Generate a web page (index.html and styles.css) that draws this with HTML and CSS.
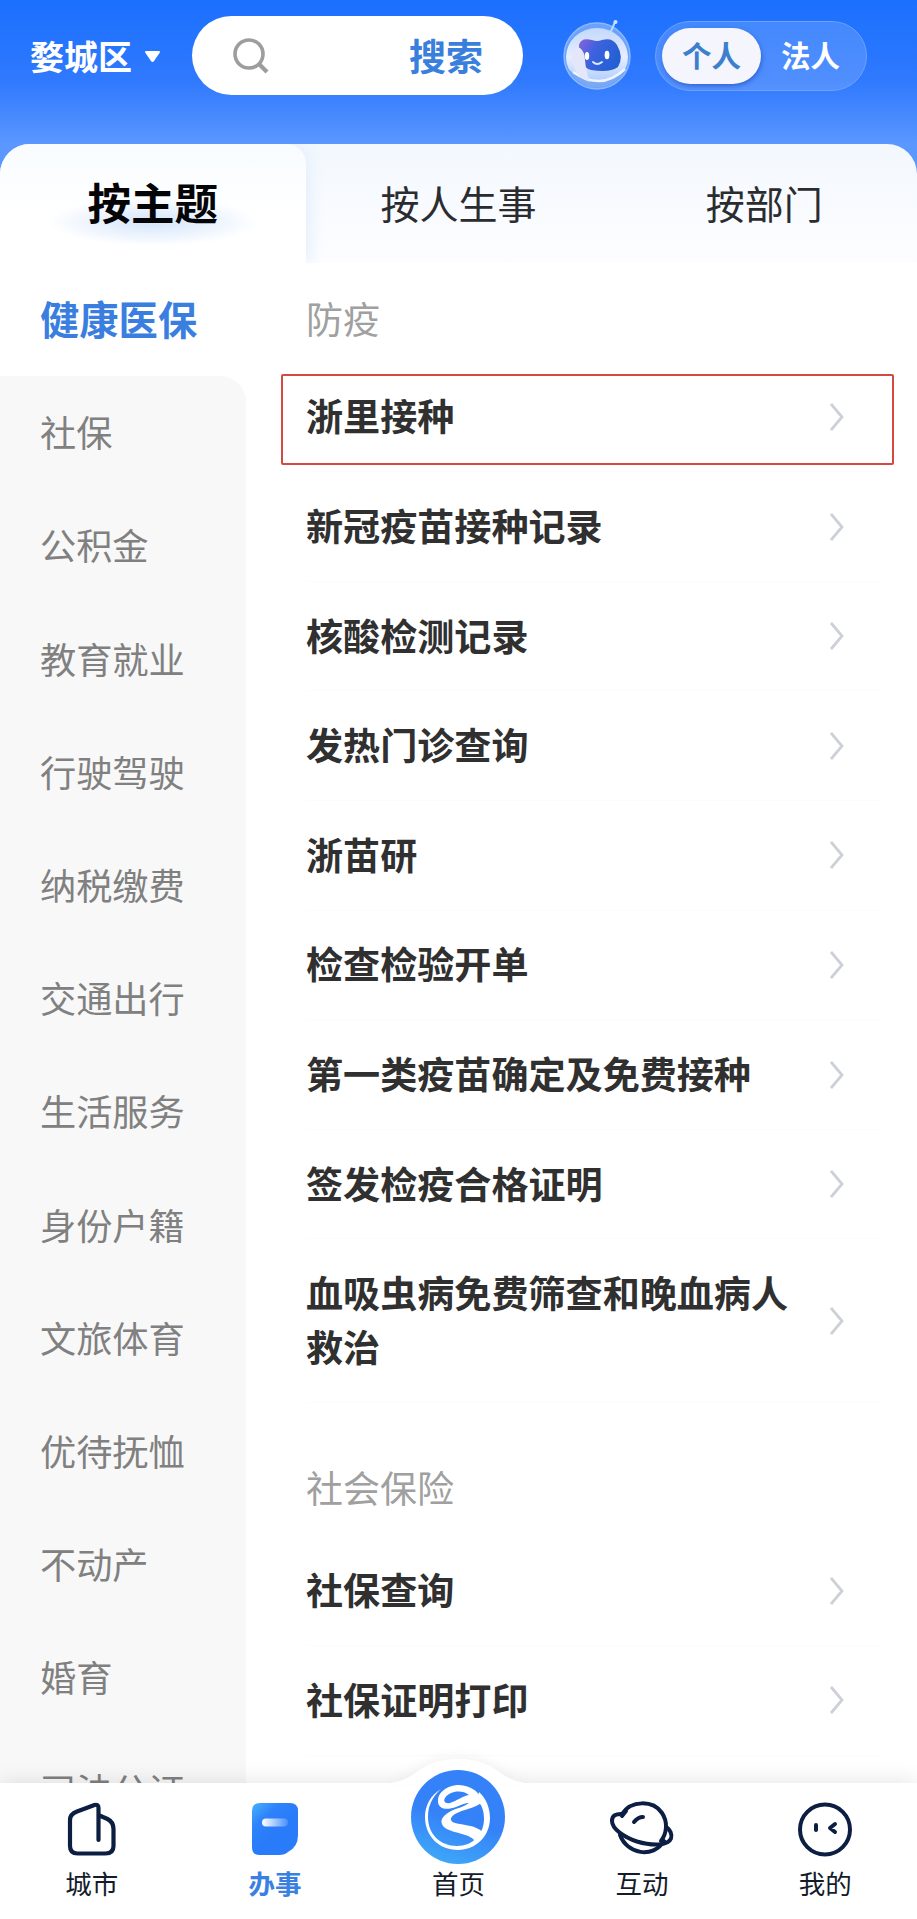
FILE: index.html
```html
<!DOCTYPE html>
<html lang="zh-CN">
<head>
    <meta charset="UTF-8">
    <title>办事</title>
    <link rel="stylesheet" href="styles.css">
</head>
<body>
    <div class="app">
        <header class="header">
            <div class="city">婺城区
                <svg class="caret" width="17" height="13" viewBox="0 0 17 13"><path d="M2.500 1h12q2.500 0 1 2l-5.500 8q-1.500 2-3 0L1.500 3q-1.500-2 1-2z" fill="#fff"/></svg>
            </div>
            <div class="search">
                <svg width="38" height="38" viewBox="0 0 38 38" fill="none" stroke="#9d9d9d" stroke-width="3.600"><circle cx="17" cy="17" r="14"/><path d="M27 27l8 8" stroke-width="4.200"/></svg>
                <span>搜索</span>
            </div>
            <svg class="robot" width="70" height="74" viewBox="0 0 70 74">
                <defs>
                    <linearGradient id="face" x1="0" y1="0" x2="1" y2="0.400"><stop offset="0" stop-color="#8a62dc"/><stop offset="0.450" stop-color="#3d62dd"/><stop offset="1" stop-color="#2460d4"/></linearGradient>
                    <linearGradient id="helmet" x1="0" y1="0" x2="0" y2="1"><stop offset="0" stop-color="#c3d8fa"/><stop offset="0.500" stop-color="#e6eefe"/><stop offset="1" stop-color="#a9c8fb"/></linearGradient>
                </defs>
                <circle cx="35" cy="38" r="33" fill="#6ba2fc" stroke="#8bb8fd" stroke-width="1.500"/>
                <path d="M47 18l6-14" stroke="#b5dcff" stroke-width="2"/><circle cx="53.500" cy="4" r="2" fill="#c7eaff"/>
                <ellipse cx="35" cy="39" rx="31" ry="29" fill="url(#helmet)"/>
                <path d="M6 51q13 20 31 18t28-19q-12 14-29 13T6 51z" fill="#79a9f6"/>
                <path d="M11 54q13 9 26 9t26-12" fill="none" stroke="#eef5ff" stroke-width="2.500"/>
                <path d="M17 27q2-8 13-5 5 2 10 0 10-3 15 5 7 12 1 22-8 6-27 3-12-3-12-25z" fill="url(#face)"/>
                <path d="M10 36q2-8 8-6 5 4 5 12 1 12 5 22-11-3-15-12-4-8-3-16z" fill="#e4e6fa"/>
                <ellipse cx="25" cy="38" rx="2.200" ry="4" fill="#fff"/><ellipse cx="45" cy="37" rx="2.400" ry="4.200" fill="#fff"/>
                <path d="M31 44q4 4 9 0" fill="none" stroke="#d8edff" stroke-width="1.800" stroke-linecap="round"/>
            </svg>
            <div class="switch">
                <span class="on">个人</span>
                <span>法人</span>
            </div>
        </header>

        <div class="tabs">
            <div class="tab active"><span>按主题</span></div>
            <div class="tab">按人生事</div>
            <div class="tab">按部门</div>
        </div>

        <main class="content">
            <ul class="sidebar">
                <li class="current">健康医保</li>
                <li class="first">社保</li>
                <li>公积金</li>
                <li>教育就业</li>
                <li>行驶驾驶</li>
                <li>纳税缴费</li>
                <li>交通出行</li>
                <li>生活服务</li>
                <li>身份户籍</li>
                <li>文旅体育</li>
                <li>优待抚恤</li>
                <li>不动产</li>
                <li>婚育</li>
                <li>司法公证</li>
            </ul>

            <section class="list">
                <h2>防疫</h2>
                <div class="row marked"><span>浙里接种</span><svg class="arrow" viewBox="0 0 14 28"><path d="M1 1l11 13L1 27"/></svg></div>
                <div class="row"><span>新冠疫苗接种记录</span><svg class="arrow" viewBox="0 0 14 28"><path d="M1 1l11 13L1 27"/></svg></div>
                <div class="row"><span>核酸检测记录</span><svg class="arrow" viewBox="0 0 14 28"><path d="M1 1l11 13L1 27"/></svg></div>
                <div class="row"><span>发热门诊查询</span><svg class="arrow" viewBox="0 0 14 28"><path d="M1 1l11 13L1 27"/></svg></div>
                <div class="row"><span>浙苗研</span><svg class="arrow" viewBox="0 0 14 28"><path d="M1 1l11 13L1 27"/></svg></div>
                <div class="row"><span>检查检验开单</span><svg class="arrow" viewBox="0 0 14 28"><path d="M1 1l11 13L1 27"/></svg></div>
                <div class="row"><span>第一类疫苗确定及免费接种</span><svg class="arrow" viewBox="0 0 14 28"><path d="M1 1l11 13L1 27"/></svg></div>
                <div class="row"><span>签发检疫合格证明</span><svg class="arrow" viewBox="0 0 14 28"><path d="M1 1l11 13L1 27"/></svg></div>
                <div class="row"><span>血吸虫病免费筛查和晚血病人救治</span><svg class="arrow" viewBox="0 0 14 28"><path d="M1 1l11 13L1 27"/></svg></div>
                <h2 class="second">社会保险</h2>
                <div class="row"><span>社保查询</span><svg class="arrow" viewBox="0 0 14 28"><path d="M1 1l11 13L1 27"/></svg></div>
                <div class="row"><span>社保证明打印</span><svg class="arrow" viewBox="0 0 14 28"><path d="M1 1l11 13L1 27"/></svg></div>
            </section>
        </main>

        <nav class="navbar">
            <svg class="bump" width="150" height="26" viewBox="0 0 150 26"><path d="M0 26q18-1 31-10Q49 1 75 1t44 15q13 9 31 10z" fill="#fff"/></svg>
            <a class="item">
                <svg width="56" height="56" viewBox="0 0 56 56" fill="none" stroke="#0c1f42" stroke-width="4.200" stroke-linecap="round" stroke-linejoin="round"><path d="M34.500 39V7q0-4-4-3L13 10.500q-7 2.500-7 8.500v26q0 7.500 7.500 7.500h28q8 0 8-7.500V28q0-7-6-10l-8-3.500"/></svg>
                <span>城市</span>
            </a>
            <a class="item selected">
                <svg width="56" height="56" viewBox="0 0 56 56">
                    <defs>
                        <linearGradient id="card" x1="0" y1="0" x2="0.500" y2="0.600"><stop offset="0" stop-color="#48b2fa"/><stop offset="0.500" stop-color="#2e82fb"/><stop offset="1" stop-color="#297bfa"/></linearGradient>
                        <linearGradient id="slot"><stop offset="0" stop-color="#fff"/><stop offset="1" stop-color="#fff" stop-opacity="0.150"/></linearGradient>
                    </defs>
                    <path d="M13 2h30q8 0 8 8v24q0 12-10 17-3 3-9 3H12q-7 0-7-8V10q0-8 8-8z" fill="url(#card)"/>
                    <rect x="15" y="17.500" width="26" height="8" rx="4" fill="url(#slot)"/>
                </svg>
                <span>办事</span>
            </a>
            <a class="item home">
                <svg width="94" height="94" viewBox="0 0 94 94">
                    <defs><linearGradient id="disc" x1="0.300" y1="1" x2="0.450" y2="0.500"><stop offset="0" stop-color="#3fa9f8"/><stop offset="1" stop-color="#3581f8"/></linearGradient></defs>
                    <circle cx="47" cy="47" r="47" fill="url(#disc)"/>
                    <!-- ring -->
                    <path d="M30 19C20 25 14 35 14 47c0 19 14 33 33 33 18 0 32-14 32-32 0-10-4-20-11-26l-2 8c5 5 7 11 7 19 0 15-11 27-27 27-17 0-29-12-29-29 0-11 4-20 13-28z" fill="#fff"/>
                    <!-- river -->
                    <path d="M70 31C69 20 57 15 46 15 34 16 26 24 27 32c1 8 10 8 18 5 5-2 9-4 13-4-5 4-12 5-18 8-7 4-11 8-9 13 3 8 19 8 28 13 4 2 5 4 6 7l7-12C64 55 52 55 44 53c-6-2-5-6 0-9 7-4 15-5 21-8 3-1 5-3 5-5zM58 25c-7 1-12 6-19 8-5 1-7-2-5-5 4-7 17-9 24-3z" fill="#fff" fill-rule="evenodd"/>
                </svg>
                <span>首页</span>
            </a>
            <a class="item">
                <svg width="66" height="56" viewBox="0 0 66 56" fill="none" stroke="#0c1f42" stroke-width="4" stroke-linecap="round" stroke-linejoin="round"><path d="M13 13C22-1 44-1 53 12c6 9 5 20-1 28M11 34c7 19 33 24 44 6"/><path d="M14 13Q3 12 3 20c0 8 12 16 25 20.500 15 4.500 31 4.500 34-3 1.500-4-1-9-5-12M13 15l4-5M25 21q4-5 9-5"/></svg>
                <span>互动</span>
            </a>
            <a class="item">
                <svg width="56" height="56" viewBox="0 0 56 56" fill="none" stroke="#0c1f42" stroke-width="4" stroke-linecap="round" stroke-linejoin="round"><circle cx="28" cy="28.500" r="25"/><path d="M19 24v5M38 23l-5 4 5 4"/></svg>
                <span>我的</span>
            </a>
        </nav>
    </div>
</body>
</html>
```
FILE: styles.css
```css
* {
    box-sizing: border-box;
}

body {
    margin: 0;
    font-family: "Noto Sans CJK SC", sans-serif;
    background: #fff;
    color: #303030;
}

.app {
    height: 1919px;
    display: flex;
    flex-direction: column;
    overflow: hidden;
    background: linear-gradient(to bottom, #1b70fe 0, #2f79fe 80px, #5a97ff 144px, #5a97ff 180px, #fff 180px);
}

/* top bar */
.header {
    height: 144px;
    flex: none;
    display: flex;
    align-items: flex-start;
    padding: 16px 50px 0 30px;
}

.city {
    width: 162px;
    height: 78px;
    display: flex;
    align-items: center;
    color: #fff;
    font-size: 34px;
    font-weight: 600;
}

.caret {
    margin: 3px 0 0 12px;
}

.search {
    width: 331px;
    height: 79px;
    display: flex;
    align-items: center;
    justify-content: space-between;
    padding: 0 40px;
    border-radius: 40px;
    background: #fff;
    color: #3b7fdd;
    font-size: 37px;
    font-weight: 600;
}

.search span {
    padding-bottom: 2px;
}

.robot {
    margin: 2px 0 0 39px;
}

.switch {
    width: 212px;
    height: 70px;
    margin: 5px 0 0 auto;
    display: flex;
    align-items: center;
    padding: 0 6px;
    border: 1px solid #6aa3fb;
    border-radius: 35px;
    background: rgba(255, 255, 255, 0.16);
    color: #fff;
    font-size: 29.5px;
    font-weight: 600;
}

.switch span {
    width: 99px;
    height: 56px;
    line-height: 53px;
    text-align: center;
}

.switch .on {
    border-radius: 28px;
    background: #f4f5fd;
    color: #3b7fcd;
    box-shadow: 1px 2px 4px rgba(20, 60, 170, 0.5);
}

/* tabs */
.tabs {
    height: 119px;
    flex: none;
    display: grid;
    grid-template-columns: repeat(3, 1fr);
    border-radius: 30px 30px 0 0;
    background: linear-gradient(to bottom, #f3f8fe, #fdfdff);
    overflow: hidden;
}

.tab {
    display: flex;
    justify-content: center;
    padding-top: 30px;
    font-size: 39px;
    line-height: 56px;
    color: #2b2c30;
}

.tab.active {
    border-radius: 0 20px 0 0;
    background: radial-gradient(ellipse 105px 24px at 50% 78px, #d3e4fb, rgba(211, 228, 251, 0)), linear-gradient(to bottom, #f8fcff, #fff 60%);
    box-shadow: 4px 0 16px #e4eefc;
    color: #050507;
    font-size: 43.5px;
    font-weight: 600;
}

/* two columns below the tabs */
.content {
    flex: 1;
    min-height: 0;
    display: flex;
    overflow: hidden;
    background: #fff;
}

.sidebar {
    width: 246px;
    margin: 0;
    padding: 0;
    list-style: none;
    flex: none;
}

.sidebar li {
    height: 113.2px;
    padding-left: 40px;
    line-height: 110.2px;
    font-size: 36.2px;
    color: #808080;
    background: #f8f8f8;
}

.sidebar .current {
    background: #fff;
    color: #3a7fdf;
    font-size: 39.3px;
    font-weight: 600;
}

.sidebar .first {
    border-radius: 0 26px 0 0;
}

.list {
    flex: 1;
    padding: 0 37px 0 60px;
}

.list h2 {
    margin: 0;
    height: 99.7px;
    padding-top: 28px;
    line-height: 54px;
    font-size: 37px;
    font-weight: 400;
    color: #a0a0a0;
}

.list h2.second {
    height: 133.5px;
    padding-top: 57px;
}

.row {
    position: relative;
    display: flex;
    align-items: center;
    justify-content: space-between;
    padding: 25.8px 36px 25.8px 0;
    border-bottom: 1px solid #fcfcfc;
    font-size: 37.1px;
    line-height: 54px;
    font-weight: 600;
}

.row span {
    max-width: 490px;
    margin-bottom: 3px;
}

.row.marked::after {
    content: "";
    position: absolute;
    top: 11px;
    left: -25px;
    right: -14px;
    height: 87px;
    border: 2px solid #d24a42;
    border-radius: 2px;
}

.arrow {
    flex: none;
    width: 14px;
    height: 28px;
    fill: none;
    stroke: #ccd1d8;
    stroke-width: 2.8;
}

/* bottom navigation */
.navbar {
    position: relative;
    height: 136px;
    flex: none;
    display: grid;
    grid-template-columns: repeat(5, 1fr);
    grid-template-rows: 136px;
    background: #fff;
    box-shadow: 0 -2px 20px rgba(0, 0, 0, 0.1);
}

.bump {
    position: absolute;
    left: 50%;
    top: -25px;
    margin-left: -76px;
    overflow: visible;
    filter: drop-shadow(0 -4px 5px rgba(0, 0, 0, 0.04));
}

.item {
    position: relative;
    display: flex;
    flex-direction: column;
    align-items: center;
    justify-content: flex-end;
    padding-bottom: 17px;
    font-size: 26.5px;
    line-height: 38px;
    color: #141c2b;
}

.item svg {
    flex: none;
    margin-bottom: 7px;
}

.item.home svg {
    margin-bottom: 0;
}

.selected {
    color: #3a80e2;
    font-weight: 600;
}
```
